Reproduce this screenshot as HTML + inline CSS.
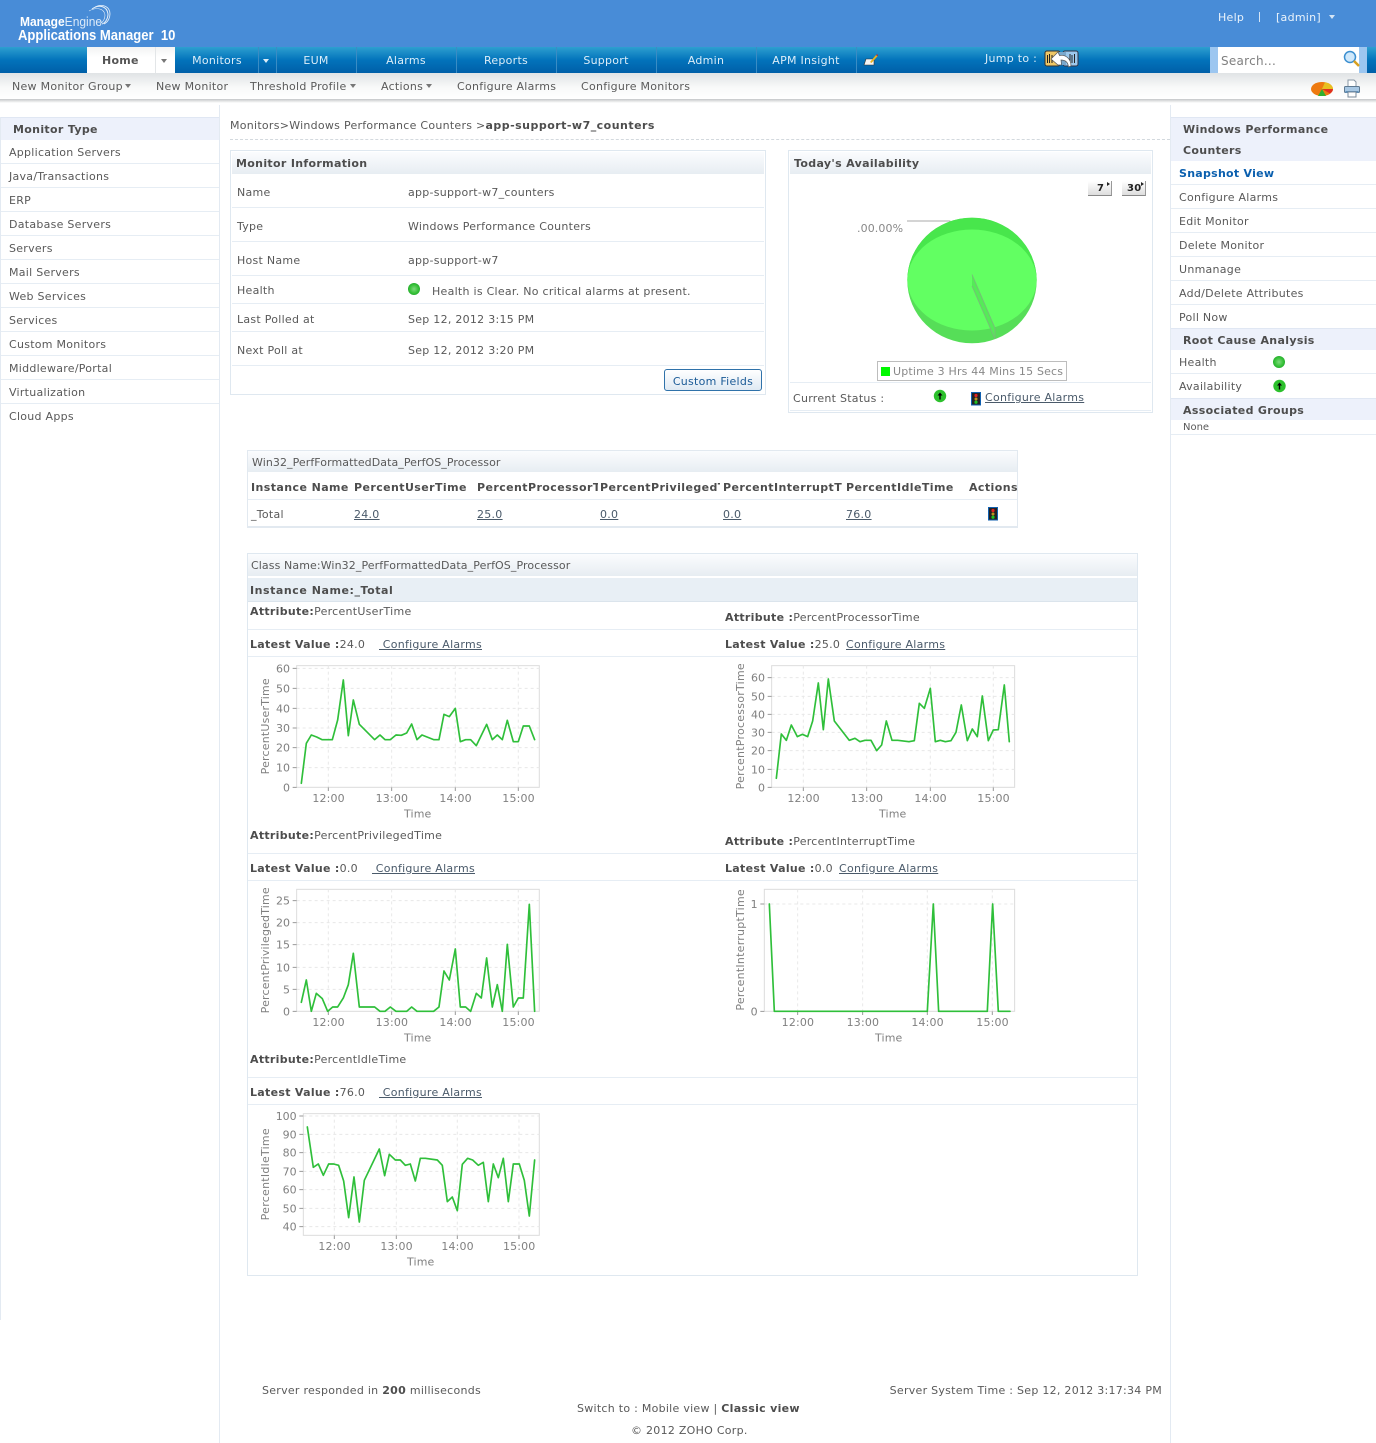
<!DOCTYPE html>
<html><head><meta charset="utf-8"><title>Applications Manager</title>
<style>
html,body{margin:0;padding:0;background:#fff}
#p{position:relative;width:1376px;height:1443px;overflow:hidden;font:11px/14px "DejaVu Sans",Verdana,sans-serif;letter-spacing:.27px;color:#595959;background:#fff}
#p div,#p a,#p span.t{position:absolute}
.t{white-space:nowrap;transform:translateY(1px)}
b{color:#4d4d4d;letter-spacing:.3px}
a{color:#4a5a6a;text-decoration:underline}
.n{color:#dcedf8;text-align:center;top:53px;height:14px}
.sep{top:47px;width:1px;height:26px;background:#3a8cc4}
.s{top:79px;color:#5a5a5a}
.hl{height:1px;background:#e6edf4}
.bar{background:linear-gradient(#fbfcfe,#e7edf2)}
.sh{background:#edf1fb}
.tri{width:0;height:0;border-left:3.5px solid transparent;border-right:3.5px solid transparent;border-top:4px solid #777}
.th{font-weight:bold;color:#4d4d4d;letter-spacing:.42px;white-space:nowrap}
.btn{background:linear-gradient(#fff,#ddd);border-bottom:1px solid #888;border-right:1px solid #999;box-sizing:border-box}
</style></head><body><div id="p">

<div style="left:0;top:0;width:1376px;height:47px;background:#488cd7"></div>
<div style="left:0;top:47px;width:1376px;height:26px;background:linear-gradient(#2d9fd0,#0273bb 50%,#005fa8)"></div>
<div style="left:0;top:73px;width:1376px;height:26px;background:linear-gradient(#e0e3e5,#f8f9f9 55%,#fff)"></div>
<div style="left:0;top:99px;width:1376px;height:4px;background:linear-gradient(#c4c6c8,#fff)"></div>

<!-- logo -->
<svg style="position:absolute;left:85px;top:3px" width="30" height="26" viewBox="0 0 30 26" fill="none" stroke="#e6f0fa"><path d="M7 6 C14 1 22 3 23 11 C23 16 20 20 17 21" stroke-width="1"/><path d="M10 4 C18 0 25 4 25 11 C25 15 23 19 19 21" stroke-width=".8"/><path d="M4 8 C11 4 19 5 20 12 C20 16 18 19 15 21" stroke-width=".6"/></svg>
<span class="t" style="left:20px;top:14px;font:12.5px/14px 'Liberation Sans',sans-serif;letter-spacing:0;color:#fff;transform:translateY(1px) scaleX(.96);transform-origin:left"><span style="font-weight:bold;color:#fff">Manage</span><span style="color:#dceaf8">Engine</span></span>
<span class="t" style="left:18px;top:28px;font:bold 14.5px/15px 'Liberation Sans',sans-serif;letter-spacing:0;color:#fff;transform:translateY(1px) scaleX(.9);transform-origin:left">Applications Manager&nbsp; 10</span>

<span class="t" style="left:1218px;top:10px;color:#eaf3fb">Help</span>
<div style="left:1259px;top:12px;width:1px;height:10px;background:#d5e5f5"></div>
<span class="t" style="left:1276px;top:10px;color:#eaf3fb">[admin]</span>
<div class="tri" style="left:1329px;top:15px;border-top-color:#d5e5f5"></div>

<!-- nav -->
<div style="left:87px;top:47px;width:88px;height:26px;background:linear-gradient(#f2f3f3,#fff 40%)"></div>
<div style="left:155px;top:47px;width:1px;height:26px;background:#e3e6e8"></div>
<span class="t" style="left:102px;top:53px;font-weight:bold;color:#555">Home</span>
<div class="tri" style="left:161px;top:59px"></div>
<span class="t n" style="left:176px;width:82px">Monitors</span>
<div class="sep" style="left:258px"></div>
<div class="tri" style="left:263px;top:59px;border-top-color:#dcedf8"></div>
<div class="sep" style="left:276px"></div>
<span class="t n" style="left:276px;width:80px">EUM</span>
<div class="sep" style="left:356px"></div>
<span class="t n" style="left:356px;width:100px">Alarms</span>
<div class="sep" style="left:456px"></div>
<span class="t n" style="left:456px;width:100px">Reports</span>
<div class="sep" style="left:556px"></div>
<span class="t n" style="left:556px;width:100px">Support</span>
<div class="sep" style="left:656px"></div>
<span class="t n" style="left:656px;width:100px">Admin</span>
<div class="sep" style="left:756px"></div>
<span class="t n" style="left:756px;width:100px">APM Insight</span>
<div class="sep" style="left:856px"></div>
<svg style="position:absolute;left:863px;top:54px" width="16" height="13" viewBox="0 0 16 13"><path d="M1 11 L3 5 H11 V11 Z" fill="#f4f4f4" stroke="#333" stroke-width=".6"/><path d="M7 8 L13 1 L14.5 2.2 L8.5 9 Z" fill="#e8b020"/><path d="M13 1 L14.5 2.2 L15 1 L14 .3Z" fill="#d02020"/></svg>
<span class="t" style="left:985px;top:51px;color:#dcedf8">Jump to :</span>
<svg style="position:absolute;left:1044px;top:49px" width="36" height="20" viewBox="0 0 36 20"><rect x="1" y="2" width="15" height="15" rx="2" fill="#eec766" stroke="#333"/><rect x="19" y="2" width="15" height="15" rx="2" fill="#9cc8ec" stroke="#334"/><rect x="14" y="3" width="8" height="13" fill="#7aa8cc"/><path d="M3.5 6v8M5.5 5v9M8 6v8M26 5v9M28 6v8M30.500 5v9" stroke="#222" stroke-width="1"/><path d="M7 10 L14 3 L15.500 6.500 C21 5.500 27 9 27 17 L24.500 18 C24 13 21 11 17 11 L17.500 16 L14 16 Z" fill="#fff" stroke="#555" stroke-width=".7"/></svg>
<div style="left:1210px;top:47px;width:157px;height:26px;background:#9cc6f0"></div>
<div style="left:1218px;top:47px;width:141px;height:26px;background:#fff"></div>
<span class="t" style="left:1221px;top:53px;font-size:12px;color:#808080">Search...</span>
<svg style="position:absolute;left:1343px;top:50px" width="18" height="18" viewBox="0 0 18 18"><circle cx="7" cy="7" r="5.5" fill="#cfe8fb" stroke="#3b8fd0" stroke-width="1.5"/><path d="M11 11 L16 16" stroke="#d8a020" stroke-width="2.5"/></svg>

<!-- sub nav -->
<span class="t s" style="left:12px">New Monitor Group</span><div class="tri" style="left:125px;top:84px"></div>
<span class="t s" style="left:156px">New Monitor</span>
<span class="t s" style="left:250px">Threshold Profile</span><div class="tri" style="left:350px;top:84px"></div>
<span class="t s" style="left:381px">Actions</span><div class="tri" style="left:426px;top:84px"></div>
<span class="t s" style="left:457px">Configure Alarms</span>
<span class="t s" style="left:581px">Configure Monitors</span>
<svg style="position:absolute;left:1310px;top:80px" width="24" height="17" viewBox="0 0 24 17"><ellipse cx="12" cy="9" rx="11" ry="7" fill="#ee7a10"/><path d="M12 9 L23 9 A11 7 0 0 0 15 2.3 Z" fill="#e8c020"/><path d="M12 9 L23 9 A11 7 0 0 1 20 13.5 Z" fill="#e03020"/><path d="M12 9 L16 16 L8 16 Z" fill="#30b030"/></svg>
<svg style="position:absolute;left:1343px;top:79px" width="18" height="19" viewBox="0 0 18 19"><path d="M5 1H11L13 3V8H5Z" fill="#fff" stroke="#8a98a6"/><rect x="1.500" y="7.500" width="15" height="6" rx="1" fill="#a8c8e4" stroke="#5f7a92"/><rect x="2.500" y="12" width="13" height="2" fill="#5f8fb8"/><rect x="5" y="13" width="8" height="5" fill="#fff" stroke="#7a8a9a"/></svg>

<!-- left sidebar -->
<div style="left:0;top:117px;width:1px;height:1203px;background:#e3eaf2"></div>
<div style="left:219px;top:105px;width:1px;height:1338px;background:#e3eaf2"></div>
<div class="sh" style="left:1px;top:117px;width:218px;height:23px;border-top:1px solid #e0e7f3;box-sizing:border-box"></div>
<span class="t" style="left:13px;top:122px;font-weight:bold;color:#4d4d4d;letter-spacing:.33px">Monitor Type</span>
<span class="t" style="left:9px;top:145px">Application Servers</span><div class="hl" style="left:1px;top:163px;width:218px"></div>
<span class="t" style="left:9px;top:169px">Java/Transactions</span><div class="hl" style="left:1px;top:187px;width:218px"></div>
<span class="t" style="left:9px;top:193px">ERP</span><div class="hl" style="left:1px;top:211px;width:218px"></div>
<span class="t" style="left:9px;top:217px">Database Servers</span><div class="hl" style="left:1px;top:235px;width:218px"></div>
<span class="t" style="left:9px;top:241px">Servers</span><div class="hl" style="left:1px;top:259px;width:218px"></div>
<span class="t" style="left:9px;top:265px">Mail Servers</span><div class="hl" style="left:1px;top:283px;width:218px"></div>
<span class="t" style="left:9px;top:289px">Web Services</span><div class="hl" style="left:1px;top:307px;width:218px"></div>
<span class="t" style="left:9px;top:313px">Services</span><div class="hl" style="left:1px;top:331px;width:218px"></div>
<span class="t" style="left:9px;top:337px">Custom Monitors</span><div class="hl" style="left:1px;top:355px;width:218px"></div>
<span class="t" style="left:9px;top:361px">Middleware/Portal</span><div class="hl" style="left:1px;top:379px;width:218px"></div>
<span class="t" style="left:9px;top:385px">Virtualization</span><div class="hl" style="left:1px;top:403px;width:218px"></div>
<span class="t" style="left:9px;top:409px">Cloud Apps</span>

<!-- right sidebar -->
<div style="left:1170px;top:105px;width:1px;height:1338px;background:#e3eaf2"></div>
<div class="sh" style="left:1171px;top:117px;width:205px;height:44px;border-top:1px solid #e0e7f3;box-sizing:border-box"></div>
<span class="t" style="left:1183px;top:122px;font-weight:bold;color:#4d4d4d;letter-spacing:.33px">Windows Performance</span>
<span class="t" style="left:1183px;top:143px;font-weight:bold;color:#4d4d4d;letter-spacing:.33px">Counters</span>
<span class="t" style="left:1179px;top:166px;font-weight:bold;color:#0a5fae">Snapshot View</span><div class="hl" style="left:1171px;top:184px;width:205px"></div>
<span class="t" style="left:1179px;top:190px">Configure Alarms</span><div class="hl" style="left:1171px;top:208px;width:205px"></div>
<span class="t" style="left:1179px;top:214px">Edit Monitor</span><div class="hl" style="left:1171px;top:232px;width:205px"></div>
<span class="t" style="left:1179px;top:238px">Delete Monitor</span><div class="hl" style="left:1171px;top:256px;width:205px"></div>
<span class="t" style="left:1179px;top:262px">Unmanage</span><div class="hl" style="left:1171px;top:280px;width:205px"></div>
<span class="t" style="left:1179px;top:286px">Add/Delete Attributes</span><div class="hl" style="left:1171px;top:304px;width:205px"></div>
<span class="t" style="left:1179px;top:310px">Poll Now</span>
<div class="sh" style="left:1171px;top:328px;width:205px;height:22px;border-top:1px solid #e0e7f3;box-sizing:border-box"></div>
<span class="t" style="left:1183px;top:333px;font-weight:bold;color:#4d4d4d;letter-spacing:.33px">Root Cause Analysis</span>
<span class="t" style="left:1179px;top:355px">Health</span><div class="hl" style="left:1171px;top:373px;width:205px"></div>
<span class="t" style="left:1179px;top:379px">Availability</span>
<div class="sh" style="left:1171px;top:398px;width:205px;height:22px;border-top:1px solid #e0e7f3;box-sizing:border-box"></div>
<span class="t" style="left:1183px;top:403px;font-weight:bold;color:#4d4d4d;letter-spacing:.33px">Associated Groups</span>
<span class="t" style="left:1183px;top:420px;font-size:10px;letter-spacing:0">None</span><div class="hl" style="left:1171px;top:434px;width:205px"></div>

<!-- breadcrumb -->
<span class="t" style="left:230px;top:118px">Monitors&gt;Windows Performance Counters &gt;<b style="letter-spacing:.48px">app-support-w7_counters</b></span>
<div style="left:230px;top:139px;width:940px;height:0;border-top:1px dashed #d3d9de"></div>

<!-- monitor info -->
<div style="left:230px;top:150px;width:534px;height:243px;border:1px solid #dfe8f0"></div>
<div class="bar" style="left:232px;top:152px;width:532px;height:22px"></div>
<span class="t" style="left:236px;top:156px;font-weight:bold;color:#4d4d4d;letter-spacing:.33px">Monitor Information</span>
<span class="t" style="left:237px;top:185px">Name</span><span class="t" style="left:408px;top:185px">app-support-w7_counters</span>
<div class="hl" style="left:232px;top:207px;width:532px"></div>
<span class="t" style="left:237px;top:219px">Type</span><span class="t" style="left:408px;top:219px">Windows Performance Counters</span>
<div class="hl" style="left:232px;top:241px;width:532px"></div>
<span class="t" style="left:237px;top:253px">Host Name</span><span class="t" style="left:408px;top:253px">app-support-w7</span>
<div class="hl" style="left:232px;top:275px;width:532px"></div>
<span class="t" style="left:237px;top:283px">Health</span><span class="t" style="left:432px;top:284px">Health is Clear. No critical alarms at present.</span>
<div class="hl" style="left:232px;top:303px;width:532px"></div>
<span class="t" style="left:237px;top:312px">Last Polled at</span><span class="t" style="left:408px;top:312px">Sep 12, 2012 3:15 PM</span>
<div class="hl" style="left:232px;top:331px;width:532px"></div>
<span class="t" style="left:237px;top:343px">Next Poll at</span><span class="t" style="left:408px;top:343px">Sep 12, 2012 3:20 PM</span>
<div class="hl" style="left:232px;top:365px;width:532px"></div>
<div style="left:664px;top:369px;width:96px;height:20px;border:1px solid #2f72aa;border-radius:3px;background:linear-gradient(#fff,#dfe9f3)"></div>
<span class="t" style="left:664px;top:374px;width:98px;text-align:center;color:#1a5a96">Custom Fields</span>

<!-- availability -->
<div style="left:788px;top:150px;width:363px;height:261px;border:1px solid #dfe8f0"></div>
<div class="bar" style="left:790px;top:152px;width:361px;height:22px"></div>
<span class="t" style="left:794px;top:156px;font-weight:bold;color:#4d4d4d;letter-spacing:.33px">Today's Availability</span>
<div class="btn" style="left:1088px;top:181px;width:24px;height:15px"></div>
<span class="t" style="left:1097px;top:181px;font-size:10px;font-weight:bold;color:#222">7</span>
<div style="left:1107px;top:182px;width:0;height:0;border-left:3px solid #222;border-top:2.500px solid transparent;border-bottom:2.500px solid transparent"></div>
<div class="btn" style="left:1122px;top:181px;width:24px;height:15px"></div>
<span class="t" style="left:1127px;top:181px;font-size:10px;font-weight:bold;color:#222">30</span>
<div style="left:1141px;top:182px;width:0;height:0;border-left:3px solid #222;border-top:2.500px solid transparent;border-bottom:2.500px solid transparent"></div>
<span class="t" style="left:857px;top:221px;color:#888;letter-spacing:.1px">.00.00%</span>
<svg style="position:absolute;left:900px;top:210px" width="145" height="140" viewBox="900 210 145 140">
<path d="M907 221H950L952 226" fill="none" stroke="#aaa"/>
<ellipse cx="972" cy="280.5" rx="64.7" ry="62.8" fill="#56de58"/>
<path d="M907.3 280.5 A64.7 62.8 0 0 1 1036.7 280.5Z" fill="#48e64c"/>
<ellipse cx="972" cy="280" rx="64.5" ry="50.5" fill="#62ff62"/>
<path d="M972 274.5 L995 328 L995 339 L972 286Z" fill="#55ea58"/>
<path d="M972 274.5 L995 328 M972 286 L995 339 M995 328V339" stroke="#7cb67c" fill="none" stroke-width=".8"/>
</svg>
<div style="left:877px;top:361px;width:188px;height:18px;border:1px solid #bdbdbd"></div>
<div style="left:881px;top:367px;width:9px;height:9px;background:#00f800"></div>
<span class="t" style="left:893px;top:364px;color:#888;letter-spacing:.18px">Uptime 3 Hrs 44 Mins 15 Secs</span>
<div class="hl" style="left:790px;top:382px;width:361px"></div>
<span class="t" style="left:793px;top:391px">Current Status :</span>
<a class="t" style="left:985px;top:390px">Configure Alarms</a>
<div class="hl" style="left:790px;top:410px;width:361px"></div>

<!-- table 1 -->
<div style="left:247px;top:450px;width:769px;height:75px;border:1px solid #e2e9f0;border-bottom:2px solid #e2e9f0"></div>
<div class="bar" style="left:248px;top:451px;width:769px;height:21px"></div>
<span class="t" style="left:252px;top:455px;letter-spacing:.07px">Win32_PerfFormattedData_PerfOS_Processor</span>
<span class="t th" style="left:251px;top:480px">Instance Name</span>
<span class="t th" style="left:354px;top:480px">PercentUserTime</span>
<div class="th" style="left:477px;top:481px;width:121px;height:14px;overflow:hidden">PercentProcessorTime</div>
<div class="th" style="left:600px;top:481px;width:120px;height:14px;overflow:hidden">PercentPrivilegedTime</div>
<div class="th" style="left:723px;top:481px;width:120px;height:14px;overflow:hidden">PercentInterruptTime</div>
<span class="t th" style="left:846px;top:480px">PercentIdleTime</span>
<span class="t th" style="left:969px;top:480px">Actions</span>
<div class="hl" style="left:248px;top:499px;width:769px"></div>
<span class="t" style="left:251px;top:507px">_Total</span>
<a class="t" style="left:354px;top:507px">24.0</a><a class="t" style="left:477px;top:507px">25.0</a><a class="t" style="left:600px;top:507px">0.0</a><a class="t" style="left:723px;top:507px">0.0</a><a class="t" style="left:846px;top:507px">76.0</a>

<!-- panel 2 -->
<div style="left:247px;top:553px;width:889px;height:721px;border:1px solid #dfe8f0"></div>
<div class="bar" style="left:248px;top:554px;width:889px;height:22px"></div>
<span class="t" style="left:251px;top:558px;letter-spacing:.1px">Class Name:Win32_PerfFormattedData_PerfOS_Processor</span>
<div style="left:248px;top:578px;width:889px;height:24px;background:#e8eff5;border-bottom:1px solid #dbe4ec;box-sizing:border-box"></div>
<span class="t" style="left:250px;top:583px;font-weight:bold;color:#4d4d4d;letter-spacing:.55px">Instance Name:_Total</span>

<span class="t" style="left:250px;top:604px"><b>Attribute:</b>PercentUserTime</span>
<span class="t" style="left:725px;top:610px"><b>Attribute :</b>PercentProcessorTime</span>
<div class="hl" style="left:248px;top:629px;width:889px"></div>
<span class="t" style="left:250px;top:637px"><b>Latest Value :</b>24.0</span><a class="t" style="left:379px;top:637px">&nbsp;Configure Alarms</a>
<span class="t" style="left:725px;top:637px"><b>Latest Value :</b>25.0</span><a class="t" style="left:846px;top:637px">Configure Alarms</a>
<div class="hl" style="left:248px;top:656px;width:889px"></div>

<span class="t" style="left:250px;top:828px"><b>Attribute:</b>PercentPrivilegedTime</span>
<span class="t" style="left:725px;top:834px"><b>Attribute :</b>PercentInterruptTime</span>
<div class="hl" style="left:248px;top:853px;width:889px"></div>
<span class="t" style="left:250px;top:861px"><b>Latest Value :</b>0.0</span><a class="t" style="left:372px;top:861px">&nbsp;Configure Alarms</a>
<span class="t" style="left:725px;top:861px"><b>Latest Value :</b>0.0</span><a class="t" style="left:839px;top:861px">Configure Alarms</a>
<div class="hl" style="left:248px;top:880px;width:889px"></div>

<span class="t" style="left:250px;top:1052px"><b>Attribute:</b>PercentIdleTime</span>
<div class="hl" style="left:248px;top:1077px;width:889px"></div>
<span class="t" style="left:250px;top:1085px"><b>Latest Value :</b>76.0</span><a class="t" style="left:379px;top:1085px">&nbsp;Configure Alarms</a>
<div class="hl" style="left:248px;top:1104px;width:889px"></div>

<!-- icons + charts -->
<svg style="position:absolute;left:0;top:0" width="1376" height="1443" viewBox="0 0 1376 1443">
<defs>
<radialGradient id="gb" cx=".5" cy=".5" r=".55"><stop offset="0" stop-color="#7fd87f"/><stop offset=".6" stop-color="#3cc43c"/><stop offset="1" stop-color="#1fa82a"/></radialGradient>
</defs>
<g id="icons">
<circle cx="414" cy="289" r="6" fill="url(#gb)"/>
<circle cx="1279" cy="362" r="6" fill="url(#gb)"/>
<circle cx="1279.5" cy="386" r="6.2" fill="#2cc02c"/><path d="M1279.5 382.5 L1277 385.5H1278.8V389.5H1280.2V385.5H1282Z" fill="#000"/>
<circle cx="940" cy="396" r="6.2" fill="#2cc02c"/><path d="M940 392.5 L937.5 395.5H939.3V399.5H940.7V395.5H942.5Z" fill="#000"/>
<rect x="971.5" y="392.5" width="9" height="12.5" fill="#222" stroke="#1060b0"/><circle cx="976" cy="395.5" r="1.6" fill="#e02020"/><circle cx="976" cy="399" r="1.5" fill="#c09020"/><circle cx="976" cy="402.2" r="1.6" fill="#20c020"/>
<rect x="988.5" y="507.5" width="9" height="12.5" fill="#222" stroke="#1060b0"/><circle cx="993" cy="510.5" r="1.6" fill="#e02020"/><circle cx="993" cy="514" r="1.5" fill="#c09020"/><circle cx="993" cy="517.2" r="1.6" fill="#20c020"/>
</g>

<style>
.ax{font-family:"DejaVu Sans",Verdana,sans-serif;font-size:33px;fill:#808080;letter-spacing:0}
.bx{fill:#fff;stroke:#dcdcdc;stroke-width:3}
.gr{stroke:#e8e8e8;stroke-width:3;stroke-dasharray:9 9;fill:none}
.tk{stroke:#999;stroke-width:3;fill:none}
.ln{fill:none;stroke:#2fbf3a;stroke-width:5;stroke-linejoin:round;stroke-linecap:round}
</style>

<!-- chart 1 -->
<g transform="translate(240 655) scale(.3333)">
<rect class="bx" x="170" y="32" width="728" height="365"/>
<path class="gr" d="M265 32V397M455 32V397M646 32V397M835 32V397M170 40H898M170 100H898M170 160H898M170 219H898M170 278H898M170 338H898"/>
<path class="tk" d="M158 40H170M158 100H170M158 160H170M158 219H170M158 278H170M158 338H170M158 397H170M265 397V408M455 397V408M646 397V408M835 397V408"/>
<text class="ax" x="150" y="52" text-anchor="end">60</text><text class="ax" x="150" y="112" text-anchor="end">50</text><text class="ax" x="150" y="172" text-anchor="end">40</text><text class="ax" x="150" y="231" text-anchor="end">30</text><text class="ax" x="150" y="290" text-anchor="end">20</text><text class="ax" x="150" y="350" text-anchor="end">10</text><text class="ax" x="150" y="409" text-anchor="end">0</text>
<text class="ax" x="217" y="441" textLength="97">12:00</text><text class="ax" x="407" y="441" textLength="97">13:00</text><text class="ax" x="598" y="441" textLength="97">14:00</text><text class="ax" x="787" y="441" textLength="97">15:00</text>
<text class="ax" x="492" y="488" textLength="82">Time</text>
<text class="ax" transform="translate(87 358) rotate(-90)" textLength="288">PercentUserTime</text>
<polyline class="ln" points="184,385 199,265 214,240 230,246 246,254 262,254 277,254 293,195 310,75 325,242 340,135 358,208 404,254 420,240 435,254 451,254 468,240 484,241 500,234 515,207 531,254 546,240 581,254 597,254 612,178 628,185 646,160 661,260 677,254 692,254 709,272 740,208 757,254 772,240 787,254 802,196 820,260 835,260 850,213 868,213 884,254"/>
</g>

<!-- chart 2 -->
<g transform="translate(720 655) scale(.3333)">
<rect class="bx" x="155" y="32" width="729" height="365"/>
<path class="gr" d="M250 32V397M440 32V397M631 32V397M820 32V397M155 68H884M155 124H884M155 178H884M155 232H884M155 287H884M155 343H884"/>
<path class="tk" d="M143 68H155M143 124H155M143 178H155M143 232H155M143 287H155M143 343H155M143 397H155M250 397V408M440 397V408M631 397V408M820 397V408"/>
<text class="ax" x="135" y="80" text-anchor="end">60</text><text class="ax" x="135" y="136" text-anchor="end">50</text><text class="ax" x="135" y="190" text-anchor="end">40</text><text class="ax" x="135" y="244" text-anchor="end">30</text><text class="ax" x="135" y="299" text-anchor="end">20</text><text class="ax" x="135" y="355" text-anchor="end">10</text><text class="ax" x="135" y="409" text-anchor="end">0</text>
<text class="ax" x="202" y="441" textLength="97">12:00</text><text class="ax" x="392" y="441" textLength="97">13:00</text><text class="ax" x="583" y="441" textLength="97">14:00</text><text class="ax" x="772" y="441" textLength="97">15:00</text>
<text class="ax" x="477" y="488" textLength="82">Time</text>
<text class="ax" transform="translate(72 403) rotate(-90)" textLength="378">PercentProcessorTime</text>
<polyline class="ln" points="169,370 184,237 199,256 214,210 232,245 247,238 263,245 278,198 295,84 310,224 325,72 343,198 388,256 405,250 420,260 435,256 453,256 470,287 485,270 499,198 516,256 533,256 567,260 583,257 598,145 613,160 631,100 646,260 661,256 676,260 693,257 708,232 724,150 742,257 757,222 772,245 787,123 805,257 820,225 835,224 853,90 868,260"/>
</g>

<!-- chart 3 -->
<g transform="translate(240 880) scale(.3333)">
<rect class="bx" x="170" y="28" width="728" height="366"/>
<path class="gr" d="M265 28V394M455 28V394M646 28V394M835 28V394M170 62H898M170 128H898M170 194H898M170 262H898M170 328H898"/>
<path class="tk" d="M158 62H170M158 128H170M158 194H170M158 262H170M158 328H170M158 394H170M265 394V405M455 394V405M646 394V405M835 394V405"/>
<text class="ax" x="150" y="74" text-anchor="end">25</text><text class="ax" x="150" y="140" text-anchor="end">20</text><text class="ax" x="150" y="206" text-anchor="end">15</text><text class="ax" x="150" y="274" text-anchor="end">10</text><text class="ax" x="150" y="340" text-anchor="end">5</text><text class="ax" x="150" y="406" text-anchor="end">0</text>
<text class="ax" x="217" y="438" textLength="97">12:00</text><text class="ax" x="407" y="438" textLength="97">13:00</text><text class="ax" x="598" y="438" textLength="97">14:00</text><text class="ax" x="787" y="438" textLength="97">15:00</text>
<text class="ax" x="492" y="485" textLength="82">Time</text>
<text class="ax" transform="translate(87 400) rotate(-90)" textLength="378">PercentPrivilegedTime</text>
<polyline class="ln" points="184,367 199,300 214,394 229,340 247,356 263,394 278,381 293,381 310,354 325,314 340,220 358,381 404,381 420,394 435,394 451,381 468,394 500,394 515,381 531,394 581,394 597,381 612,273 628,300 646,207 661,381 677,381 692,394 709,340 724,354 740,234 757,381 772,314 787,394 802,193 820,381 835,354 850,354 868,73 884,394"/>
</g>

<!-- chart 4 -->
<g transform="translate(720 880) scale(.3333)">
<rect class="bx" x="133" y="28" width="751" height="366"/>
<path class="gr" d="M233 28V394M428 28V394M622 28V394M817 28V394M133 72H884"/>
<path class="tk" d="M121 72H133M121 394H133M233 394V405M428 394V405M622 394V405M817 394V405"/>
<text class="ax" x="113" y="84" text-anchor="end">1</text><text class="ax" x="113" y="406" text-anchor="end">0</text>
<text class="ax" x="185" y="438" textLength="97">12:00</text><text class="ax" x="380" y="438" textLength="97">13:00</text><text class="ax" x="574" y="438" textLength="97">14:00</text><text class="ax" x="769" y="438" textLength="97">15:00</text>
<text class="ax" x="465" y="485" textLength="82">Time</text>
<text class="ax" transform="translate(72 392) rotate(-90)" textLength="364">PercentInterruptTime</text>
<polyline class="ln" points="148,72 163,394 622,394 640,72 656,394 802,394 818,72 835,394 870,394"/>
</g>

<!-- chart 5 -->
<g transform="translate(240 1105) scale(.3333)">
<rect class="bx" x="190" y="26" width="708" height="365"/>
<path class="gr" d="M283 26V391M469 26V391M652 26V391M837 26V391M190 33H898M190 88H898M190 143H898M190 199H898M190 254H898M190 310H898M190 365H898"/>
<path class="tk" d="M178 33H190M178 88H190M178 143H190M178 199H190M178 254H190M178 310H190M178 365H190M283 391V402M469 391V402M652 391V402M837 391V402"/>
<text class="ax" x="170" y="45" text-anchor="end">100</text><text class="ax" x="170" y="100" text-anchor="end">90</text><text class="ax" x="170" y="155" text-anchor="end">80</text><text class="ax" x="170" y="211" text-anchor="end">70</text><text class="ax" x="170" y="266" text-anchor="end">60</text><text class="ax" x="170" y="322" text-anchor="end">50</text><text class="ax" x="170" y="377" text-anchor="end">40</text>
<text class="ax" x="235" y="435" textLength="97">12:00</text><text class="ax" x="421" y="435" textLength="97">13:00</text><text class="ax" x="604" y="435" textLength="97">14:00</text><text class="ax" x="789" y="435" textLength="97">15:00</text>
<text class="ax" x="501" y="482" textLength="82">Time</text>
<text class="ax" transform="translate(87 346) rotate(-90)" textLength="276">PercentIdleTime</text>
<polyline class="ln" points="202,66 220,187 235,177 250,211 266,177 281,177 296,181 311,228 326,338 342,216 358,351 373,226 418,132 434,212 448,148 466,165 481,165 496,181 511,177 526,228 541,160 556,160 592,165 607,181 622,290 637,276 652,317 667,178 683,160 698,165 715,181 730,172 745,290 760,177 775,218 790,160 805,290 820,177 838,177 853,226 868,333 884,165"/>
</g>
</svg>

<!-- footer -->
<span class="t" style="left:262px;top:1383px">Server responded in <b>200</b> milliseconds</span>
<span class="t" style="right:214px;top:1383px">Server System Time : Sep 12, 2012 3:17:34 PM</span>
<span class="t" style="left:577px;top:1401px">Switch to : Mobile view | <b>Classic view</b></span>
<span class="t" style="left:631px;top:1423px">© 2012 ZOHO Corp.</span>
</div></body></html>
